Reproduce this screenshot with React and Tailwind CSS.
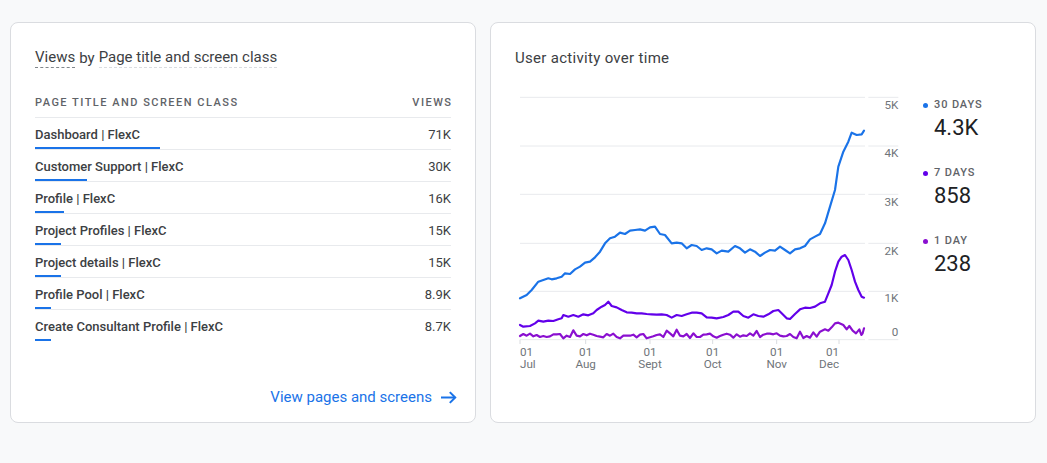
import React from "react";

const pages = [
  { name: "Dashboard | FlexC", views: "71K", bar: 125 },
  { name: "Customer Support | FlexC", views: "30K", bar: 52 },
  { name: "Profile | FlexC", views: "16K", bar: 29 },
  { name: "Project Profiles | FlexC", views: "15K", bar: 26 },
  { name: "Project details | FlexC", views: "15K", bar: 26 },
  { name: "Profile Pool | FlexC", views: "8.9K", bar: 16 },
  { name: "Create Consultant Profile | FlexC", views: "8.7K", bar: 16 },
];

// chart space is 3 units per px
const thirty = [
  [90, 655], [110, 645], [125, 630], [145, 605], [160, 600], [175, 595], [185, 598], [200, 595],
  [215, 590], [225, 580], [240, 582], [255, 568], [270, 560], [285, 548], [300, 545], [315, 532],
  [330, 515], [345, 490], [360, 475], [375, 470], [390, 458], [405, 462], [420, 452], [435, 450],
  [450, 448], [465, 452], [480, 442], [495, 440], [510, 462], [525, 465], [545, 490], [560, 488],
  [575, 490], [590, 505], [605, 495], [620, 498], [635, 510], [650, 505], [665, 508], [680, 520],
  [695, 512], [715, 515], [735, 498], [750, 505], [765, 518], [780, 508], [795, 515], [810, 528],
  [825, 518], [840, 510], [855, 512], [870, 500], [885, 510], [900, 520], [915, 508], [930, 505],
  [945, 498], [960, 478], [975, 470], [990, 462], [1005, 430], [1020, 380], [1035, 330], [1045, 260],
  [1060, 215], [1075, 185], [1085, 158], [1100, 165], [1115, 163], [1122, 152],
];

const seven = [
  [90, 735], [100, 740], [120, 738], [135, 730], [145, 722], [160, 725], [175, 722], [190, 723],
  [205, 718], [215, 715], [220, 705], [235, 710], [250, 705], [265, 710], [280, 703], [295, 706],
  [310, 700], [320, 690], [335, 680], [345, 675], [355, 665], [365, 678], [380, 682], [395, 690],
  [410, 697], [425, 698], [440, 700], [455, 700], [470, 702], [485, 703], [500, 704], [515, 703],
  [530, 705], [545, 713], [560, 705], [575, 708], [590, 703], [605, 698], [620, 698], [635, 700],
  [650, 712], [665, 713], [680, 715], [700, 711], [715, 705], [730, 695], [745, 695], [760, 708],
  [775, 713], [790, 703], [805, 708], [820, 710], [835, 703], [850, 693], [865, 690], [875, 700],
  [890, 715], [900, 717], [915, 702], [930, 688], [945, 683], [960, 684], [975, 680], [990, 670],
  [1005, 665], [1015, 640], [1025, 615], [1035, 575], [1045, 545], [1055, 530], [1065, 525],
  [1075, 540], [1085, 570], [1095, 605], [1105, 630], [1115, 650], [1122, 653],
];

function daily() {
  let s = 7;
  const rnd = () => {
    s = (s * 9301 + 49297) % 233280;
    return s / 233280;
  };
  const pts = [];
  for (let x = 90; x <= 980; x += 10) {
    let y = 768 + (rnd() - 0.5) * 16;
    if (rnd() > 0.93) y -= 12;
    pts.push([x, Math.round(y)]);
  }
  return pts.concat([
    [990, 755], [1005, 748], [1015, 752], [1025, 742], [1035, 730], [1045, 728], [1060, 735],
    [1070, 748], [1078, 738], [1088, 752], [1098, 760], [1108, 748], [1114, 765], [1118, 760], [1122, 745],
  ]);
}
const one = daily();

const toPts = (arr) => arr.map(([x, y]) => `${x},${y}`).join(" ");

const grid = [52, 198, 343, 490, 634, 779];
const yLabels = [
  ["5K", 87], ["4K", 232], ["3K", 377], ["2K", 524], ["1K", 667], ["0", 767],
];
const months = [
  ["Jul", 90, "start"], ["Aug", 287, "middle"], ["Sept", 480, "middle"],
  ["Oct", 668, "middle"], ["Nov", 860, "middle"], ["Dec", 1047, "end"],
];

function ActivityChart() {
  return (
    <svg width="395" height="300" viewBox="75 0 1185 900" className="shrink-0">
      {grid.map((y) => (
        <g key={y} stroke="#e8eaed" strokeWidth="3">
          <line x1="90" x2="1125" y1={y} y2={y} />
          <line x1="1135" x2="1225" y1={y} y2={y} />
        </g>
      ))}
      {months.map(([, x]) => (
        <line key={x} x1={x} x2={x} y1="779" y2="792" stroke="#dadce0" strokeWidth="3" />
      ))}
      <g fill="#70757a" fontFamily="Roboto, sans-serif" fontSize="35">
        {yLabels.map(([t, y]) => (
          <text key={t} x="1225" y={y} textAnchor="end">{t}</text>
        ))}
        {months.map(([m, x, a]) => (
          <g key={m}>
            <text x={x} y="827" textAnchor={a}>01</text>
            <text x={x} y="864" textAnchor={a}>{m}</text>
          </g>
        ))}
      </g>
      <g fill="none" strokeWidth="6.5" strokeLinejoin="round" strokeLinecap="round">
        <polyline points={toPts(one)} stroke="#8a0fd0" />
        <polyline points={toPts(seven)} stroke="#6200ea" />
        <polyline points={toPts(thirty)} stroke="#1a73e8" />
      </g>
    </svg>
  );
}

const legend = [
  { label: "30 DAYS", value: "4.3K", color: "bg-[#1a73e8]" },
  { label: "7 DAYS", value: "858", color: "bg-[#6200ea]" },
  { label: "1 DAY", value: "238", color: "bg-[#8a0fd0]" },
];

function ArrowRight() {
  return (
    <svg width="16" height="13" viewBox="0 0 16 13" fill="none" stroke="#1a73e8" strokeWidth="2">
      <path d="M0 6.5h14.2" />
      <path d="M8.8 1.1l5.4 5.4-5.4 5.4" />
    </svg>
  );
}

export default function App() {
  return (
    <div className="min-h-screen bg-[#f8f9fa] pt-[22px] pl-[10px] flex gap-[14px] font-['Roboto',sans-serif]">
      <div className="w-[466px] h-[401px] bg-white border border-[#dadce0] rounded-lg px-6 pt-[25px] pb-[15px] flex flex-col">
        <div className="text-[15px] leading-5 text-[#3c4043] flex gap-[4px]">
          <span className="border-b border-dashed border-[#80868b] leading-[19px]">Views</span>
          <span>by</span>
          <span className="border-b border-dashed border-[#dadce0] leading-[19px]">Page title and screen class</span>
        </div>
        <div className="mt-[27px] flex justify-between text-[11px] leading-4 font-medium uppercase tracking-[0.135em] text-[#5f6368] pb-[6px] border-b border-[#e8eaed]">
          <span>Page title and screen class</span>
          <span className="-mr-[1.5px]">Views</span>
        </div>
        {pages.map((p, i) => (
          <div
            key={p.name}
            className={`pt-[7px] ${i < pages.length - 1 ? "border-b border-[#e8eaed]" : ""}`}
          >
            <div className="flex justify-between text-[13px] leading-5 text-[#3c4043]">
              <span className="font-medium">{p.name}</span>
              <span>{p.views}</span>
            </div>
            <div className="mt-[2px] h-[2px] bg-[#1a73e8]" style={{ width: p.bar }} />
          </div>
        ))}
        <div className="flex-1" />
        <div className="flex justify-end items-center gap-[9px] -mr-[6px] text-[15px] leading-5 text-[#1a73e8]">
          <span>View pages and screens</span>
          <ArrowRight />
        </div>
      </div>

      <div className="w-[546px] h-[401px] bg-white border border-[#dadce0] rounded-lg pl-6 pt-[25px]">
        <div className="text-[15px] leading-5 tracking-[0.02em] text-[#3c4043]">User activity over time</div>
        <div className="mt-[12px] flex">
          <ActivityChart />
          <div className="pl-[13px] pt-[18px] flex flex-col gap-6">
            {legend.map((l) => (
              <div key={l.label} className="grid grid-cols-[11px_auto]">
                <div className="flex items-center h-[14px]">
                  <div className={`w-[5px] h-[5px] rounded-full ${l.color}`} />
                </div>
                <div className="text-[11px] leading-[14px] font-medium tracking-[0.08em] text-[#5f6368]">{l.label}</div>
                <div />
                <div className="mt-[2px] text-[22px] leading-7 text-[#202124]">{l.value}</div>
              </div>
            ))}
          </div>
        </div>
      </div>
    </div>
  );
}
